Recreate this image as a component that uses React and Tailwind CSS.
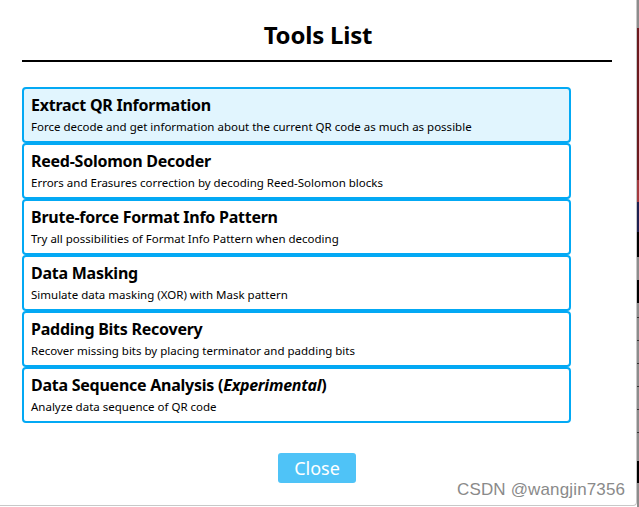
import React from "react";

const tools = [
  { t: "Extract QR Information", d: "Force decode and get information about the current QR code as much as possible", active: true },
  { t: "Reed-Solomon Decoder", d: "Errors and Erasures correction by decoding Reed-Solomon blocks" },
  { t: "Brute-force Format Info Pattern", d: "Try all possibilities of Format Info Pattern when decoding" },
  { t: "Data Masking", d: "Simulate data masking (XOR) with Mask pattern" },
  { t: "Padding Bits Recovery", d: "Recover missing bits by placing terminator and padding bits" },
  { t: "Data Sequence Analysis", exp: true, d: "Analyze data sequence of QR code" },
];

export default function App() {
  return (
    <div className="relative flex w-[639px] h-[507px] bg-white overflow-hidden" style={{ fontFamily: "'Noto Sans', 'Open Sans', sans-serif" }}>
      <div className="relative w-[637px] h-[506px] bg-white border-r border-b border-[#c8c8c8] rounded-br-[4px] flex flex-col">
        <h1 className="text-center text-[24px] font-bold text-black leading-none mt-[23px] tracking-[-0.2px]">Tools List</h1>
        <div className="mx-[22px] w-[590px] h-[2px] bg-black mt-[13px]"></div>
        <div className="ml-[22px] w-[549px] mt-[25px] flex flex-col">
          {tools.map((x, i) => (
            <div
              key={i}
              className={`h-[56px] border-2 border-[#03a9f4] rounded-[4px] px-[7px] pt-[5px] ${x.active ? "bg-[#e1f5fe]" : "bg-white"}`}
            >
              <div className="text-[16px] font-bold text-black leading-[22px] tracking-[-0.25px]">
                {x.t}
                {x.exp && (
                  <>
                    {" "}(<i>Experimental</i>)
                  </>
                )}
              </div>
              <div className="text-[11.5px] text-black leading-[22px]">{x.d}</div>
            </div>
          ))}
        </div>
        <div className="flex justify-center mt-[30px]">
          <button className="ml-[-2px] w-[78px] h-[30px] bg-[#4fc3f7] text-white text-[18px] rounded-[3px] leading-none">Close</button>
        </div>
        <div
          className="absolute left-[457px] top-[477px] text-[17px] text-[#8a8a8a] tracking-[0.15px]"
          style={{ fontFamily: "'Liberation Sans', Arial, sans-serif" }}
        >
          CSDN @wangjin7356
        </div>
      </div>
      <div className="w-[2px] h-full flex flex-col bg-[#8c8c8c]">
        <div className="h-[28px] bg-[#8c8c8c]"></div>
        <div className="h-[152px] bg-[#6b1a1f]"></div>
        <div className="h-[22px] bg-[#a33a3f]"></div>
        <div className="h-[30px] bg-[#1e2050]"></div>
        <div className="h-[25px] bg-black"></div>
        <div className="h-[23px] bg-[#8c8c8c]"></div>
        <div className="h-[23px] bg-black"></div>
        <div className="h-[14px] bg-[#8c8c8c]"></div>
        {[0, 1, 2, 3, 4, 5].map((k) => (
          <div key={k} className="h-[23px] border-t border-[#333] bg-[#8c8c8c]"></div>
        ))}
        <div className="h-[6px] bg-[#8c8c8c]"></div>
        <div className="h-[22px] bg-black"></div>
      </div>
    </div>
  );
}
